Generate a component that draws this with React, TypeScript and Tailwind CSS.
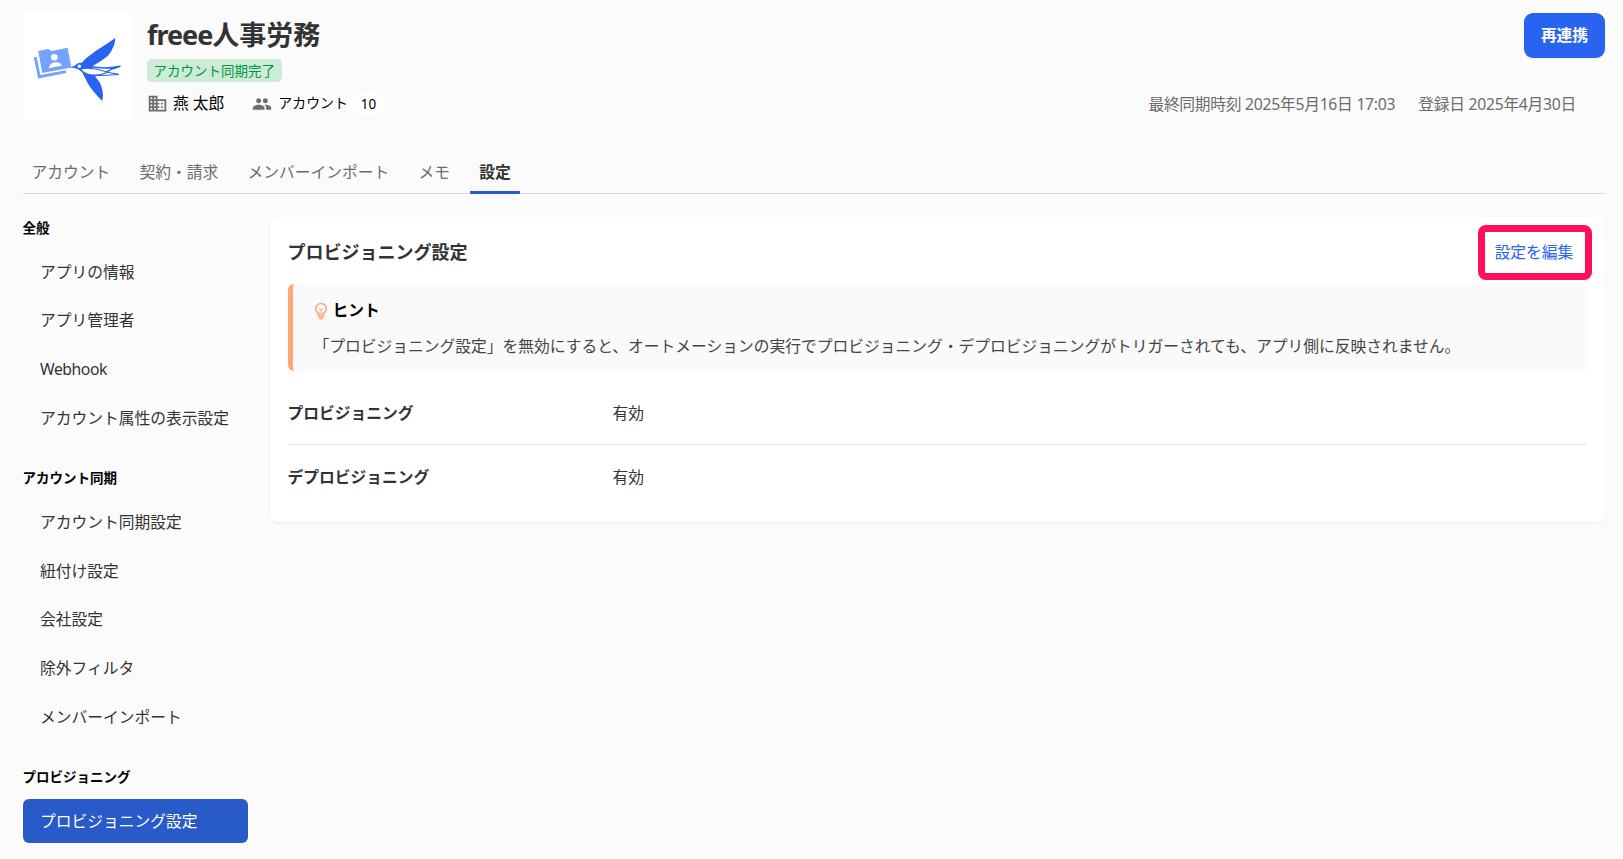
import type { ReactNode } from "react";
import { MdBusiness, MdPeople } from "react-icons/md";

function AppLogo() {
  return (
    <svg viewBox="0 0 108 108" className="size-[108px] shrink-0 bg-white">
      <g fill="#74a2ff">
        <path d="M10.800 44.300l2.800-.6 3.800 18.400 25.400-4.900.5 2.700-28.200 5.500z" />
        <path d="M15.200 38l10-2 3.200 2 16.200-3.200 3.900 19.600-29.200 5.700z" />
      </g>
      <circle cx="31.300" cy="44.200" r="3.300" fill="#fff" />
      <path d="M26 55.200c.3-4 3-5.500 6-5.900 3.200-.3 6 .8 7.200 3.300z" fill="#fff" />
      <g fill="#2864f0">
        <path d="M58 50.500L63 45.300 73 37.700Q84 31 92.200 25Q92.500 29.500 90.700 33Q88.500 39 84.700 43Q78 48.500 69.700 53L70 56L58 56.500z" />
        <path d="M56 56L59.700 60.300 64.700 70.300Q70 79 79.200 88Q80.600 83 79.700 78.700Q79 73 76.300 68.700L72.300 63.700L73 62.500Q64 61.500 58.500 57.500z" />
        <path d="M48 54.200L52.200 52.500Q54 49.500 57.500 49.700Q60.500 50.500 61 54L58 58L55.500 56.500Q53 54.700 48 54.800z" />
      </g>
      <path d="M57.500 56.300C65 53.800 76 56.500 84.500 59.300C76 63.500 63.500 63.500 57.500 56.300z" fill="#fff" stroke="#2864f0" strokeWidth="1.100" />
      <g fill="none" stroke="#2864f0" strokeWidth="1.500" strokeLinecap="round">
        <path d="M67 53.500Q82 56.500 97 53.300M83.500 59Q89 55.500 96 53.800" />
        <path d="M71 62.800Q82 62.300 95.500 61.500M84 59Q90 60.500 95.500 61.200" strokeWidth="1.100" />
      </g>
      <circle cx="56.300" cy="53.200" r="1.700" fill="#fff" />
    </svg>
  );
}

function BulbIcon() {
  return (
    <svg viewBox="0 0 14 18" className="h-[18px] w-[14px]" fill="none" stroke="#ffa876" strokeWidth="1.500">
      <path d="M4.600 12.300V11.200C2.700 10.200 1.700 8.600 1.700 6.700a5.300 5.300 0 0 1 10.600 0c0 1.900-1 3.500-2.900 4.500v1.100z" />
      <path d="M4.500 12.500v2h5v-2M4.800 16.400h4.400" />
      <path d="M4.800 6l2.200 2 2.200-2M7 8v3" strokeWidth="1" />
    </svg>
  );
}

const TABS = ["アカウント", "契約・請求", "メンバーインポート", "メモ", "設定"];

const SECTIONS = [
  { title: "全般", items: ["アプリの情報", "アプリ管理者", "Webhook", "アカウント属性の表示設定"] },
  {
    title: "アカウント同期",
    items: ["アカウント同期設定", "紐付け設定", "会社設定", "除外フィルタ", "メンバーインポート"],
  },
  { title: "プロビジョニング", items: ["プロビジョニング設定"] },
];

function Header() {
  return (
    <header className="flex h-[108px] gap-[16.500px]">
      <AppLogo />
      <div className="flex flex-1 flex-col items-start">
        <h1 className="h-[45px] text-[27px] leading-[43px] font-bold text-[#333]">
          <span className="tracking-[-1px]">freee</span>人事労務
        </h1>
        <span className="mt-px h-[23px] rounded-[5px] bg-[#cdebd7] px-[6.500px] text-[13.500px] leading-[25px] text-[#00963c]">
          アカウント同期完了
        </span>
        <div className="mt-[11px] flex h-[21px] items-center text-black">
          <MdBusiness className="mr-[5px] size-[21px] text-[#6e6b6b]" />
          <span className="pt-px text-[15.750px]">燕 太郎</span>
          <MdPeople className="mr-1.5 ml-[28px] size-5 text-[#6e6b6b]" />
          <span className="text-[13.900px]">アカウント</span>
          <span className="ml-1 h-[21px] rounded-full bg-white px-[9px] text-[13.500px] leading-[22px]">10</span>
        </div>
      </div>
      <div className="flex flex-col items-end">
        <button className="h-[45px] w-[81px] rounded-[9px] bg-[#2864f0] text-[15.750px] font-bold text-white shadow-xs">
          再連携
        </button>
        <div className="mt-[35px] mr-[29px] flex h-6 items-center gap-[23px] text-[15.750px] tracking-[-0.280px] text-[#6e6b6b]">
          <span>最終同期時刻 2025年5月16日 17:03</span>
          <span>登録日 2025年4月30日</span>
        </div>
      </div>
    </header>
  );
}

function Tabs() {
  return (
    <nav className="mt-[30px] flex h-[43px] gap-[11.250px] border-b border-[#d9d9d9]">
      {TABS.map((t) => (
        <a
          key={t}
          className={
            t === "設定"
              ? "-mb-px h-[43px] rounded-[1px] border-b-3 border-[#285ac8] px-[9px] text-[15.750px] leading-[42px] font-bold text-[#333]"
              : "h-[42px] px-[9px] text-[15.750px] leading-[42px] text-[#6e6b6b]"
          }
        >
          {t}
        </a>
      ))}
    </nav>
  );
}

function Sidebar() {
  return (
    <aside className="flex w-[225px] shrink-0 flex-col gap-[27.250px]">
      {SECTIONS.map((s) => (
        <section key={s.title}>
          <h2 className="h-[32.500px] text-[13.500px] leading-[22.500px] font-bold text-black">{s.title}</h2>
          <ul className="flex flex-col gap-[4.500px]">
            {s.items.map((i) => (
              <li
                key={i}
                className={
                  i === "プロビジョニング設定"
                    ? "h-[44.250px] rounded-[6px] bg-[#285ac8] px-[17.500px] text-[15.750px] leading-[44.250px] text-white"
                    : "h-[44.250px] px-[17.500px] text-[15.750px] leading-[44.250px] text-[#333]"
                }
              >
                {i === "Webhook" ? <span className="tracking-[-0.450px]">{i}</span> : i}
              </li>
            ))}
          </ul>
        </section>
      ))}
    </aside>
  );
}

function Row({ label, children }: { label: string; children: ReactNode }) {
  return (
    <div className="flex h-[63px] items-center border-b border-[#e5e5e5] pt-0.5 text-[15.750px] text-[#333] last:border-b-0">
      <dt className="w-[325px] font-bold">{label}</dt>
      <dd>{children}</dd>
    </div>
  );
}

function Panel() {
  return (
    <main className="h-[305px] flex-1 rounded-[7px] bg-white px-[18px] shadow-[0_1px_3px_rgba(0,0,0,0.07)]">
      <div className="flex h-[67px] items-center justify-between pt-1">
        <h2 className="text-[18px] font-bold text-[#333]">プロビジョニング設定</h2>
        <a className="-mr-[5px] flex h-[55px] w-[114px] items-center justify-center rounded-[8px] border-7 border-[#ff0f5a] pt-px pr-0.5 text-[15.750px] text-[#2864f0]">
          設定を編集
        </a>
      </div>
      <div className="h-[87px] rounded-[6px] border-l-5 border-[#ffa876] bg-[#fafafa] pt-[15px] pl-[21px]">
        <div className="flex h-6 items-center gap-[5px] text-[15.750px] font-bold text-black">
          <BulbIcon />
          ヒント
        </div>
        <p className="mt-[11px] text-[15.750px] leading-6 text-[#444]">
          「プロビジョニング設定」を無効にすると、オートメーションの実行でプロビジョニング・デプロビジョニングがトリガーされても、アプリ側に反映されません。
        </p>
      </div>
      <dl className="mt-[11px]">
        <Row label="プロビジョニング">有効</Row>
        <Row label="デプロビジョニング">有効</Row>
      </dl>
    </main>
  );
}

export default function App() {
  return (
    <div
      className="h-[859px] overflow-hidden border-t border-white bg-[#fbfbfb] pt-3 pr-[18px] pl-[22.500px] font-['Noto_Sans','Noto_Sans_CJK_JP',sans-serif]"
      lang="ja"
    >
      <Header />
      <Tabs />
      <div className="mt-[23px] flex gap-[22px]">
        <Sidebar />
        <Panel />
      </div>
    </div>
  );
}
